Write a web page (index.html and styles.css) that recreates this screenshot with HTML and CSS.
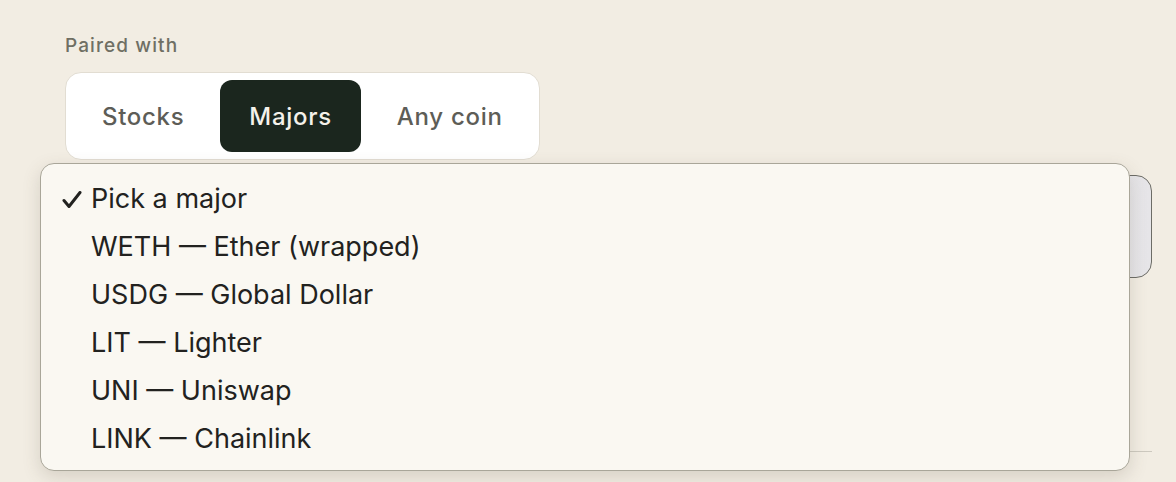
FILE: index.html
```html
<!DOCTYPE html>
<html lang="en">
<head>
  <meta charset="UTF-8" />
  <meta name="viewport" content="width=device-width, initial-scale=1.0"/>
  <title>Paired with</title>
  <link rel="stylesheet" href="styles.css">
</head>
<body>
  <div class="form">
    <div class="label">Paired with</div>
    <div class="segmented">
      <button class="seg">Stocks</button>
      <button class="seg active">Majors</button>
      <button class="seg">Any coin</button>
    </div>
    <div class="select-field"></div>
    <div class="next-field"></div>
  </div>

  <!-- native select popup -->
  <ul class="menu">
    <li class="checked">
      <svg class="check" width="22" height="20" viewBox="0 0 22 20"><path d="M3 9.5 L8 15.5 L19 1.5" fill="none" stroke="#222220" stroke-width="3" stroke-linecap="round" stroke-linejoin="round"/></svg>
      Pick a major
    </li>
    <li>WETH — Ether (wrapped)</li>
    <li>USDG — Global Dollar</li>
    <li>LIT — Lighter</li>
    <li>UNI — Uniswap</li>
    <li>LINK — Chainlink</li>
  </ul>
</body>
</html>
```

FILE: styles.css
```css
body {
  margin: 0;
  background: #f2ede3;
  font-family: Inter, "Noto Sans", sans-serif;
  height: 482px;
  overflow: hidden;
  position: relative;
}
.form {
  padding: 34px 24px 0 65px;
}
.label {
  font-size: 19px;
  font-weight: 500;
  color: #6f6f63;
  line-height: 24px;
  letter-spacing: 1.1px;
}
.segmented {
  display: inline-flex;
  gap: 7px;
  margin-top: 14px;
  padding: 7px;
  background: #fff;
  border: 1px solid #e2ddd2;
  border-radius: 16px;
}
.seg {
  font-family: inherit;
  font-size: 24px;
  font-weight: 500;
  letter-spacing: 0.7px;
  color: #5d5d57;
  background: none;
  border: none;
  border-radius: 12px;
  padding: 0 29px;
  height: 72px;
}
.seg.active {
  background: #1b261e;
  color: #f4f1ea;
}
.select-field {
  margin-top: 15px;
  height: 101px;
  background: linear-gradient(90deg, #e9e8ec, #f3f3f5 60%, #e6e5e8);
  border: 1px solid #6c6c66;
  border-radius: 16px;
}
.next-field {
  margin-top: 173px;
  border-top: 1px solid #cdc9bf;
}
.menu {
  position: absolute;
  left: 40px;
  top: 163px;
  width: 1090px;
  height: 308px;
  box-sizing: border-box;
  margin: 0;
  padding: 11px 0 9px;
  list-style: none;
  background: #faf8f2;
  border: 1px solid #a9a699;
  border-radius: 14px;
  box-shadow: 0 6px 18px rgba(90, 80, 60, 0.18);
}
.menu li {
  height: 48px;
  line-height: 48px;
  padding-left: 50px;
  font-size: 27px;
  color: #222220;
  position: relative;
}
.check {
  position: absolute;
  left: 20px;
  top: 16px;
}
```
